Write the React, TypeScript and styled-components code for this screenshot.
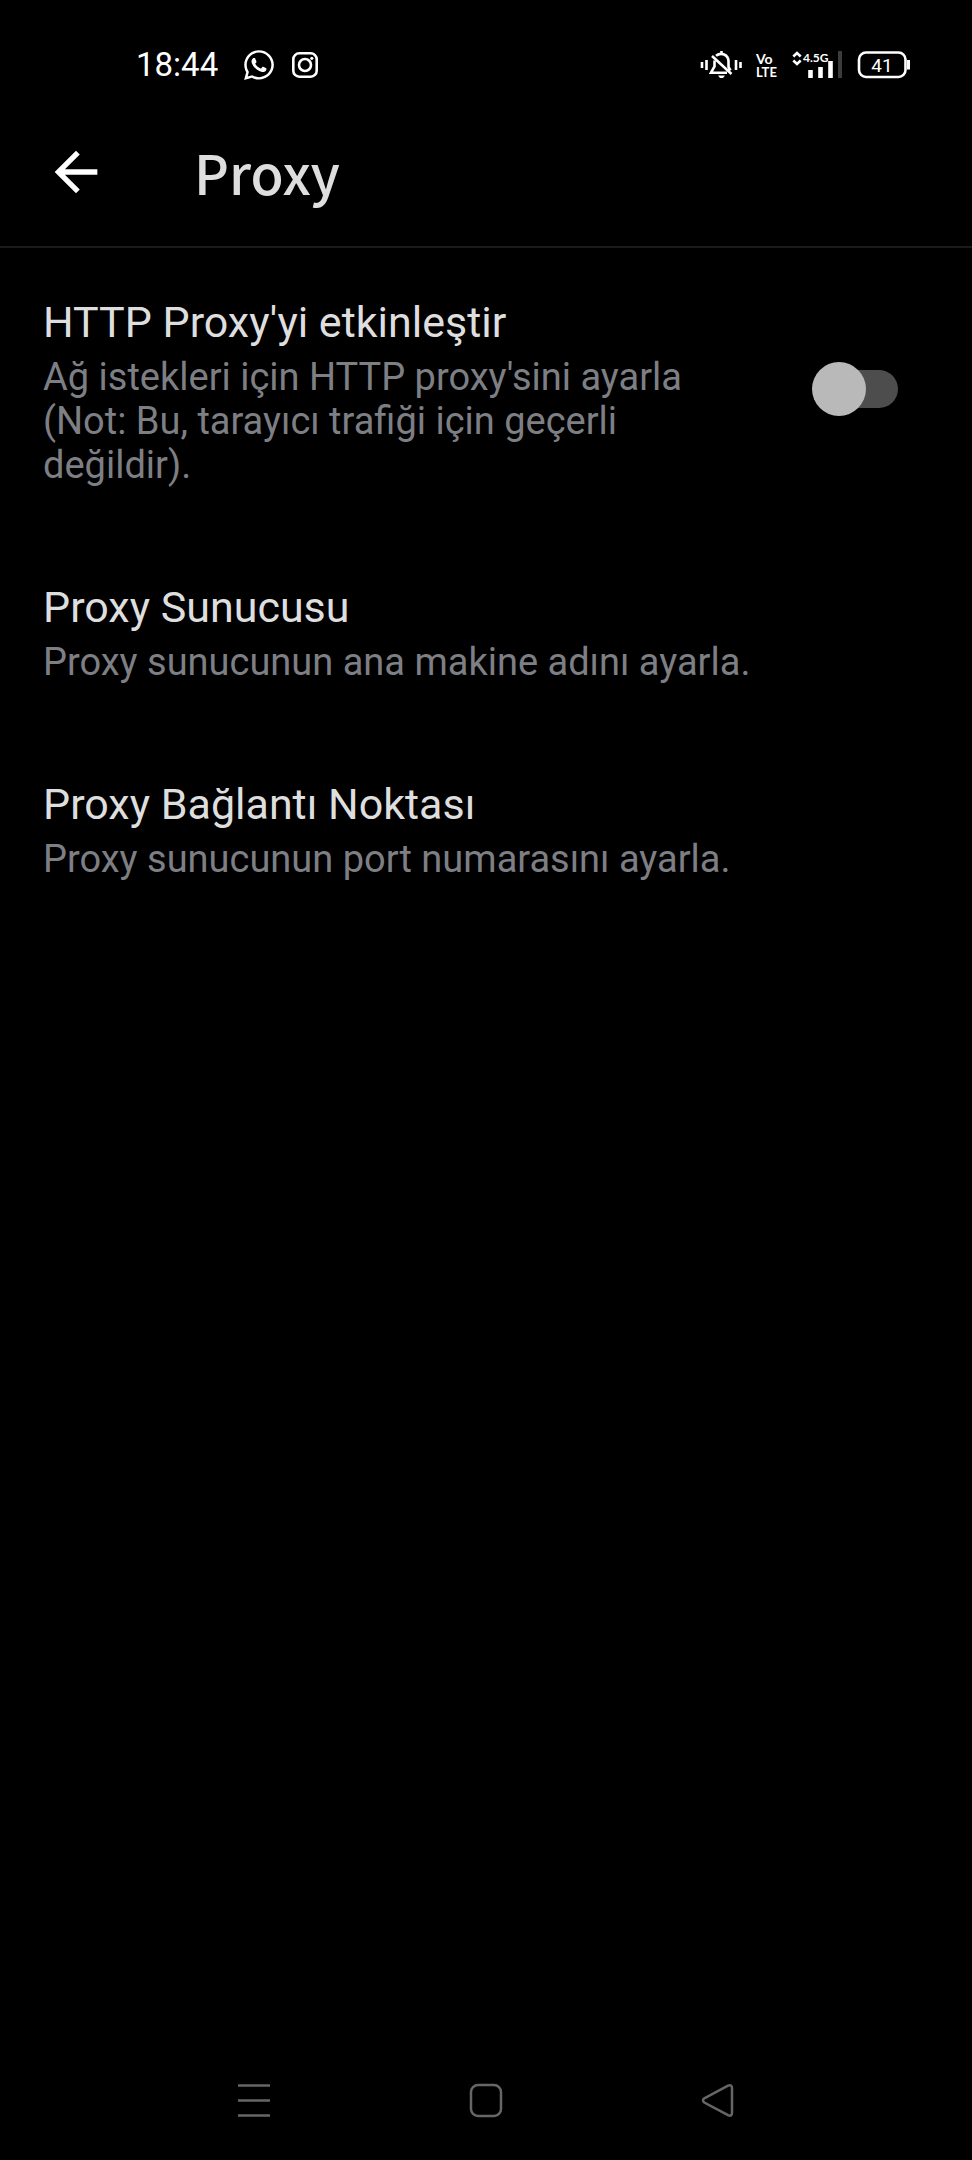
import React, { useState } from "react";
import styled, { createGlobalStyle, css } from "styled-components";
import { FaWhatsapp } from "react-icons/fa";

const GlobalStyle = createGlobalStyle`
  *, *::before, *::after { box-sizing: border-box; }
  html, body, #root { height: 100%; }
  body {
    margin: 0;
    background: #000;
    color: #dedede;
    font-family: Roboto, "Noto Sans", sans-serif;
  }
`;

const Screen = styled.div`
  display: flex;
  flex-direction: column;
  min-height: 100%;
`;

const StatusBar = styled.div`
  display: flex;
  align-items: center;
  justify-content: space-between;
  height: 97px;
  padding: 32px 61px 0 136px;
  color: #fff;
`;

const StatusGroup = styled.div<{ $gap: number }>`
  display: flex;
  align-items: center;
  gap: ${(p) => p.$gap}px;
`;

const Clock = styled.time`
  margin-right: 9px;
  font-size: 33px;
  line-height: 40px;
`;

const StatusSvg = styled.svg`
  display: block;
  overflow: visible;
  fill: none;
  stroke: #fff;
`;

const SvgLabel = styled.text<{ $size: number }>`
  fill: #fff;
  stroke: none;
  font-family: Lato, Roboto, sans-serif;
  font-size: ${(p) => p.$size}px;
  font-weight: 700;
`;

const BatteryText = styled.text`
  fill: #fff;
  stroke: none;
  font-size: 19px;
  text-anchor: middle;
`;

const Toolbar = styled.header`
  display: flex;
  align-items: center;
  gap: 86px;
  height: 151px;
  padding: 0 44px;
  border-bottom: 2px solid #1a1a1a;
`;

const IconButton = styled.button`
  display: flex;
  padding: 0;
  border: 0;
  background: none;
  color: #fff;
  cursor: pointer;
`;

const Title = styled.h1`
  margin: 0;
  font-family: "Noto Sans CJK SC", Roboto, sans-serif;
  font-size: 54px;
  line-height: 64px;
  font-weight: 500;
`;

const List = styled.main`
  display: flex;
  flex: 1;
  flex-direction: column;
  gap: 3px;
`;

const rowStyle = css`
  display: flex;
  align-items: center;
  gap: 64px;
  padding: 0 74px 0 43px;
  border: 0;
  background: none;
  color: inherit;
  font-family: inherit;
  text-align: left;
  cursor: pointer;
`;

const SwitchRow = styled.label`
  ${rowStyle}
`;

const ActionRow = styled.button`
  ${rowStyle}
`;

const RowText = styled.span`
  display: flex;
  flex: 1;
  flex-direction: column;
  gap: 8px;
  padding: 49px 0 43px;
`;

const RowTitle = styled.span`
  font-size: 43px;
  line-height: 50px;
`;

const RowSummary = styled.span`
  color: #7d7f84;
  font-size: 38px;
  line-height: 44px;
`;

const SwitchBox = styled.span`
  display: grid;
  align-items: center;
  flex: none;
  width: 86px;
  height: 54px;
`;

const SwitchTrack = styled.input`
  grid-area: 1 / 1;
  justify-self: end;
  appearance: none;
  width: 78px;
  height: 38px;
  margin: 0;
  border-radius: 19px;
  background: #4d4d4d;
  cursor: pointer;
`;

const Thumb = styled.span<{ $on: boolean }>`
  grid-area: 1 / 1;
  justify-self: ${(p) => (p.$on ? "end" : "start")};
  width: 54px;
  height: 54px;
  border-radius: 50%;
  background: #b9b9b9;
  pointer-events: none;
`;

const NavBar = styled.nav`
  display: flex;
  align-items: center;
  justify-content: center;
  gap: 192px;
  height: 120px;
`;

const NavSvg = styled.svg`
  display: block;
  fill: none;
  stroke: #666;
  stroke-width: 2.5;
`;

function InstagramIcon() {
  return (
    <StatusSvg width="28" height="28" viewBox="0 0 28 28" strokeWidth="2.6" aria-label="Instagram">
      <rect x="2.3" y="2.3" width="23.4" height="23.4" rx="6" />
      <circle cx="14" cy="14" r="6" />
      <circle cx="20.8" cy="7.3" r="1.6" fill="#fff" stroke="none" />
    </StatusSvg>
  );
}

function SilentIcon() {
  return (
    <StatusSvg width="42" height="30" viewBox="0 0 42 30" strokeWidth="2.6" aria-label="Sessiz">
      <path d="M2 12v6M6.5 10v10M36 10v10M40.500 12v6" />
      <path d="M14.500 10.500v6L11 22.700H27" />
      <path d="M16 5.800C21 1.700 28.500 4.500 28.500 11.500v5.500l2 3.500M12 6l19.500 18" />
      <path d="M21.500 1v3" />
      <path d="M18 25.500h7l-2 2.500h-3z" fill="#fff" stroke="none" />
    </StatusSvg>
  );
}

function VolteIcon() {
  return (
    <StatusSvg width="25" height="30" viewBox="0 0 25 30" aria-label="VoLTE">
      <SvgLabel $size={14} x="2" y="14">Vo</SvgLabel>
      <SvgLabel $size={13} x="2" y="27">LTE</SvgLabel>
    </StatusSvg>
  );
}

function SignalIcon() {
  return (
    <StatusSvg width="54" height="30" viewBox="0 0 54 30" aria-label="4.5G">
      <path d="M2.300 6.500L6 3l3.700 3.500M2.300 10.500L6 14l3.700-3.500" strokeWidth="2.600" />
      <SvgLabel $size={12} x="12" y="12">4.5G</SvgLabel>
      <path d="M19.500 28v-8M29.500 28V17M39.500 28V11" strokeWidth="4.600" />
      <path d="M49 28V1" stroke="#3c3c3c" strokeWidth="4" />
    </StatusSvg>
  );
}

function BatteryIcon() {
  return (
    <StatusSvg width="54" height="30" viewBox="0 0 54 30" strokeWidth="2.6" aria-label="Pil">
      <rect x="2" y="2.500" width="46.500" height="24.500" rx="7" />
      <path d="M51.500 10v9.500" strokeWidth="3" />
      <BatteryText x="25" y="22">41</BatteryText>
    </StatusSvg>
  );
}

export default function App() {
  const [enabled, setEnabled] = useState(false);
  return (
    <Screen>
      <GlobalStyle />
      <StatusBar>
        <StatusGroup $gap={15}>
          <Clock>18:44</Clock>
          <FaWhatsapp size={34} aria-label="WhatsApp" />
          <InstagramIcon />
        </StatusGroup>
        <StatusGroup $gap={12}>
          <SilentIcon />
          <VolteIcon />
          <SignalIcon />
          <BatteryIcon />
        </StatusGroup>
      </StatusBar>
      <Toolbar>
        <IconButton aria-label="Geri">
          <svg width="64" height="64" viewBox="0 0 24 24" fill="currentColor">
            <path d="M20 11H7.830l5.590-5.590L12 4l-8 8 8 8 1.410-1.410L7.830 13H20v-2z" />
          </svg>
        </IconButton>
        <Title>Proxy</Title>
      </Toolbar>
      <List>
        <SwitchRow>
          <RowText>
            <RowTitle>HTTP Proxy'yi etkinleştir</RowTitle>
            <RowSummary>
              Ağ istekleri için HTTP proxy'sini ayarla (Not: Bu, tarayıcı trafiği için geçerli değildir).
            </RowSummary>
          </RowText>
          <SwitchBox>
            <SwitchTrack
              type="checkbox"
              role="switch"
              checked={enabled}
              onChange={(e) => setEnabled(e.target.checked)}
            />
            <Thumb $on={enabled} />
          </SwitchBox>
        </SwitchRow>
        <ActionRow>
          <RowText>
            <RowTitle>Proxy Sunucusu</RowTitle>
            <RowSummary>Proxy sunucunun ana makine adını ayarla.</RowSummary>
          </RowText>
        </ActionRow>
        <ActionRow>
          <RowText>
            <RowTitle>Proxy Bağlantı Noktası</RowTitle>
            <RowSummary>Proxy sunucunun port numarasını ayarla.</RowSummary>
          </RowText>
        </ActionRow>
      </List>
      <NavBar>
        <IconButton aria-label="Son uygulamalar">
          <NavSvg width="40" height="40" viewBox="0 0 40 40">
            <path d="M4 5.500h32M4 20.500h32M4 35.500h32" />
          </NavSvg>
        </IconButton>
        <IconButton aria-label="Ana ekran">
          <NavSvg width="40" height="40" viewBox="0 0 40 40">
            <rect x="5" y="5" width="30" height="31" rx="7" />
          </NavSvg>
        </IconButton>
        <IconButton aria-label="Geri dön">
          <NavSvg width="40" height="40" viewBox="0 0 40 40">
            <path d="M6.300 18.300L30 5.700q4-1.700 4 2.500v24.500q0 4.200-4 2.500L6.300 22.500q-2.600-2.100 0-4.200z" />
          </NavSvg>
        </IconButton>
      </NavBar>
    </Screen>
  );
}
